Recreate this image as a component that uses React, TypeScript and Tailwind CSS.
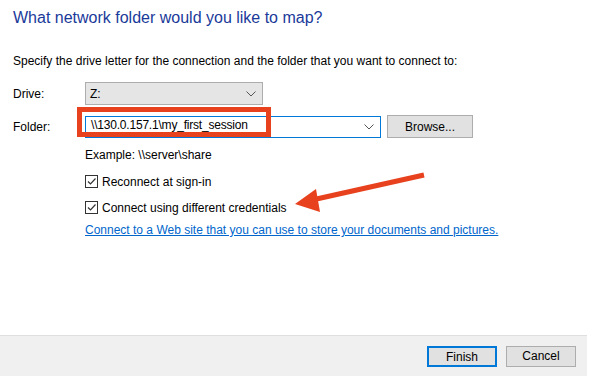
import React from "react";

const font = { fontFamily: '"Segoe UI", "Liberation Sans", Arial, sans-serif' };

const Chevron = () => (
    <svg width="10" height="6" viewBox="0 0 10 6" className="text-[#555]">
        <path d="M0.5 0.5 L5 5 L9.5 0.5" fill="none" stroke="currentColor" strokeWidth="1" />
    </svg>
);

const CheckBox = ({label}: {label: string}) => (
    <label className="flex items-center gap-[4px] h-[13px]">
        <span className="w-[13px] h-[13px] border border-[#333] bg-white flex items-center justify-center">
            <svg width="11" height="11" viewBox="0 0 11 11">
                <path d="M2 5.5 L4.5 8 L9.5 2.5" fill="none" stroke="#333" strokeWidth="1.2" />
            </svg>
        </span>
        <span className="text-[12px] text-black leading-none">{label}</span>
    </label>
);

export default function App() {
    return (
        <div className="w-[601px] h-[392px] bg-white relative overflow-hidden" style={font}>
            <div className="w-[587px] h-[376px] flex flex-col">
                {/* main content */}
                <div className="flex-1 pl-[13px] pt-[7px]">
                    <h1 className="text-[16px] leading-[22px] text-[#1a3a9a]">What network folder would you like to map?</h1>
                    <p className="text-[12px] leading-[16px] text-black mt-[24px]">
                        Specify the drive letter for the connection and the folder that you want to connect to:
                    </p>

                    <div className="mt-[13px] grid grid-cols-[72px_auto] gap-y-[10px] items-center">
                        <span className="text-[12px]">Drive:</span>
                        <div className="w-[178px] h-[23px] bg-[#e5e5e5] border border-[#adadad] flex items-center justify-between pl-[4px] pr-[6px]">
                            <span className="text-[12px]">Z:</span>
                            <Chevron />
                        </div>

                        <span className="text-[12px]">Folder:</span>
                        <div className="flex items-center gap-[6px]">
                            <div className="w-[296px] h-[22px] border border-[#0078d7] bg-white flex items-center justify-between pl-[5px] pr-[6px]">
                                <span className="text-[12px] leading-[14px] tracking-[-0.2px] -mt-[3px]">\\130.0.157.1\my_first_session</span>
                                <Chevron />
                            </div>
                            <button className="w-[86px] h-[23px] bg-[#e1e1e1] border border-[#adadad] text-[12px]">
                                Browse...
                            </button>
                        </div>
                    </div>

                    <div className="ml-[72px] mt-[10px] flex flex-col gap-[13px]">
                        <span className="text-[12px] leading-[14px]">Example: \\server\share</span>
                        <CheckBox label="Reconnect at sign-in" />
                        <CheckBox label="Connect using different credentials" />
                        <a className="text-[12px] leading-[14px] text-[#0066cc] underline -mt-[4px]">
                            Connect to a Web site that you can use to store your documents and pictures.
                        </a>
                    </div>
                </div>

                {/* footer */}
                <div className="h-[41px] bg-[#f0f0f0] border-t border-[#dfdfdf] flex items-center justify-end gap-[9px] pr-[11px]">
                    <button className="w-[70px] h-[21px] bg-[#e1e1e1] border-2 border-[#0078d7] text-[12px]">Finish</button>
                    <button className="w-[70px] h-[21px] bg-[#e1e1e1] border border-[#adadad] text-[12px]">Cancel</button>
                </div>
            </div>

            {/* annotation: red box */}
            <div className="absolute left-[77px] top-[107px] w-[194px] h-[30px] border-[5px] border-[#e8411d]" />

            {/* annotation: arrow */}
            <svg className="absolute left-0 top-0" width="601" height="392" viewBox="0 0 601 392">
                <line x1="424" y1="175" x2="312" y2="200" stroke="#e8411d" strokeWidth="5" />
                <polygon points="295,204 316,189 320,212" fill="#e8411d" />
            </svg>
        </div>
    );
}
